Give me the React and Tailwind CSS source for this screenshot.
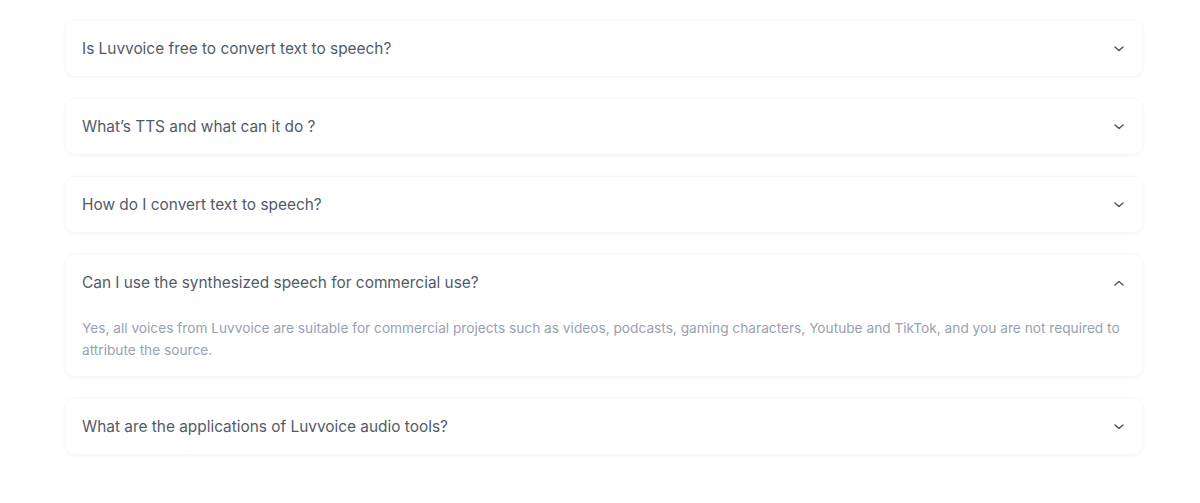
const faqs = [
  { q: "Is Luvvoice free to convert text to speech?" },
  { q: "What’s TTS and what can it do ?" },
  { q: "How do I convert text to speech?" },
  {
    q: "Can I use the synthesized speech for commercial use?",
    a: "Yes, all voices from Luvvoice are suitable for commercial projects such as videos, podcasts, gaming characters, Youtube and TikTok, and you are not required to attribute the source.",
    open: true,
  },
  { q: "What are the applications of Luvvoice audio tools?" },
]

function Chevron({ up }) {
  return (
    <svg width="10" height="6" viewBox="0 0 10 6" fill="none" className="shrink-0">
      <path
        d={up ? "M1 5L5 1.5L9 5" : "M1 1L5 4.5L9 1"}
        stroke="#4b5563"
        strokeWidth="1.5"
        strokeLinecap="round"
        strokeLinejoin="round"
      />
    </svg>
  )
}

export default function App() {
  return (
    <div className="min-h-[503px] bg-white pl-[66px] pr-[58px] pt-[21px] font-['Inter',sans-serif]">
      <div className="flex flex-col gap-[23px]">
        {faqs.map((f) => (
          <div
            key={f.q}
            className="rounded-lg bg-white shadow-[0_1px_5px_rgba(15,23,42,0.06)] ring-1 ring-gray-100/40"
          >
            <div className="flex h-[55px] items-center justify-between pl-4 pr-[18px] pt-px">
              <span className="text-[15.4px] text-[#525a68]">{f.q}</span>
              <Chevron up={f.open} />
            </div>
            {f.open && (
              <p className="px-4 pb-[15px] pt-[7px] text-[13.7px] leading-[22px] text-gray-400">{f.a}</p>
            )}
          </div>
        ))}
      </div>
    </div>
  )
}
